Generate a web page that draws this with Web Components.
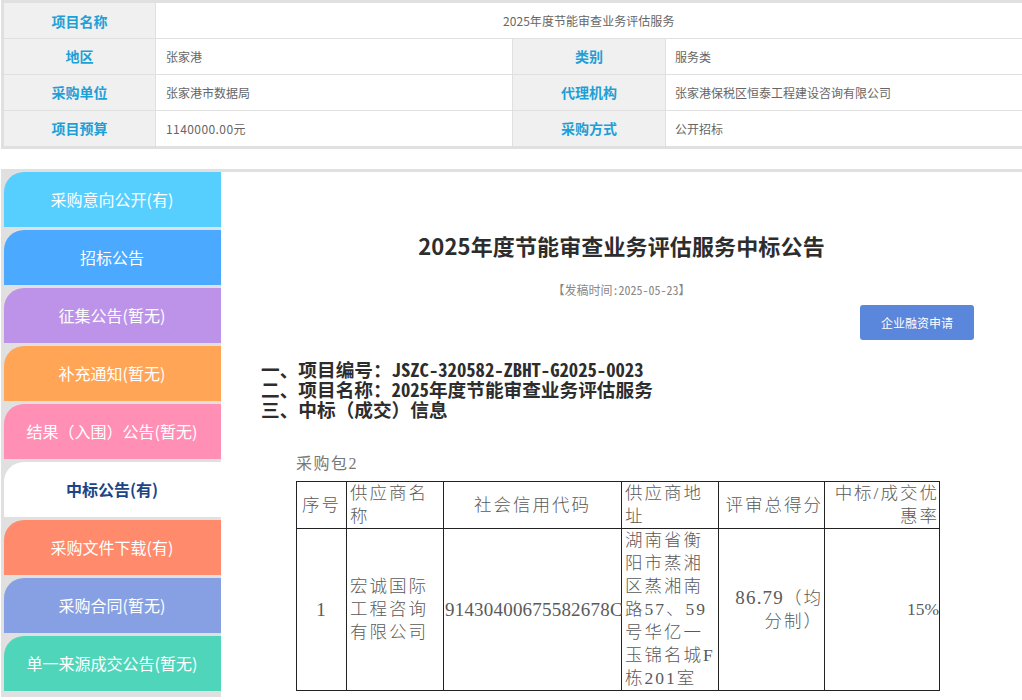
<!DOCTYPE html>
<html lang="zh-CN">
<head>
<meta charset="utf-8">
<title>中标公告</title>
<style>
html,body{margin:0;padding:0;height:700px;overflow:hidden;background:#fff}
body{font-family:"Noto Sans CJK SC","Liberation Sans",sans-serif}
</style>
</head>
<body>
<page-shell>
  <info-table></info-table>
  <notice-layout>
    <side-tab slot="side" color="#56cfff">采购意向公开(有)</side-tab>
    <side-tab slot="side" color="#4ba9ff">招标公告</side-tab>
    <side-tab slot="side" color="#bc93e8">征集公告(暂无)</side-tab>
    <side-tab slot="side" color="#ffa555">补充通知(暂无)</side-tab>
    <side-tab slot="side" color="#ff8fb5">结果（入围）公告(暂无)</side-tab>
    <side-tab slot="side" active>中标公告(有)</side-tab>
    <side-tab slot="side" color="#ff8a6c">采购文件下载(有)</side-tab>
    <side-tab slot="side" color="#87a0e3">采购合同(暂无)</side-tab>
    <side-tab slot="side" color="#4fd6ba">单一来源成交公告(暂无)</side-tab>
    <notice-body></notice-body>
  </notice-layout>
</page-shell>
<script>
function def(name, css, html, extra){
  customElements.define(name, class extends HTMLElement{
    constructor(){super();const r=this.attachShadow({mode:'open'});r.innerHTML='<style>'+css+'</style>'+html;}
    connectedCallback(){ if(extra) extra(this); }
  });
}
def('page-shell',':host{display:block;width:1022px;height:700px;overflow:hidden}','<slot></slot>');

def('info-table',`
:host{display:block;width:1030px;margin-left:1px;border:3px solid #e0e0e0;border-right:0;box-sizing:border-box;font-size:12px;color:#666}
.g{display:grid;grid-template-columns:152px 356px 1px 153px 1fr;grid-auto-rows:35px;row-gap:1px;background:#e0e0e0}
.l{background:#f0f0f0;color:#1e9fd6;font-size:14px;font-weight:700;display:flex;align-items:center;justify-content:center;border-right:1px solid #e0e0e0;box-sizing:border-box;padding-bottom:2px}
.l.first{padding-bottom:0}
.v{background:#fff;display:flex;align-items:center;padding-left:10px}
.v.rv{padding-left:9px}
.sp{background:#e0e0e0}
.full{grid-column:2/6;justify-content:flex-start;padding-left:347px;letter-spacing:.05px}
.d{letter-spacing:.42px}
`,`<div class="g">
<div class="l first">项目名称</div><div class="v full">2025年度节能审查业务评估服务</div>
<div class="l">地区</div><div class="v">张家港</div><div class="sp"></div><div class="l">类别</div><div class="v rv">服务类</div>
<div class="l">采购单位</div><div class="v">张家港市数据局</div><div class="sp"></div><div class="l">代理机构</div><div class="v rv">张家港保税区恒泰工程建设咨询有限公司</div>
<div class="l">项目预算</div><div class="v"><span class="d">1140000.00</span>元</div><div class="sp"></div><div class="l">采购方式</div><div class="v rv">公开招标</div>
</div>`);

def('notice-layout',`
:host{display:flex;margin:20px 0 0 1px;border-top:3px solid #e0e0e0;height:528px;box-sizing:border-box}
.side{width:220px;flex:none;background:#e0e0e0;padding-left:3px;box-sizing:border-box;display:flex;flex-direction:column;gap:3px}
.main{flex:1;min-width:0}
`,`<div class="side"><slot name="side"></slot></div><div class="main"><slot></slot></div>`);

def('side-tab',`
:host{display:flex;flex:none;height:55px;width:217px;box-sizing:border-box;padding:0 1px 2px 0;align-items:center;justify-content:center;color:#fff;font-size:16px;border-top-left-radius:20px;background:var(--c,#fff)}
:host([active]){color:#1c4587;font-weight:700;background:#fff}
`,`<slot></slot>`,el=>{const c=el.getAttribute('color');if(c)el.style.setProperty('--c',c);});

def('notice-body',`
:host{display:block;color:#333}
h1{margin:0;padding-top:57px;height:32px;line-height:32px;font-size:22px;letter-spacing:.13px;font-weight:700;text-align:center;color:#2d2d2d}
.date{margin-top:19px;height:20px;line-height:20px;text-align:center;font-size:12px;color:#888;font-feature-settings:"hwid"}
.act{display:flex;justify-content:flex-end;padding-right:48px;margin-top:5px}
.btn{width:114px;height:35px;display:flex;align-items:center;justify-content:center;background:#5a86db;color:#fff;font-size:12px;border-radius:3px}
.heads{margin:19px 0 0 40px;font-size:18.67px;line-height:20px;font-weight:700;color:#2d2d2d}
.heads span{font-feature-settings:"hwid";line-height:20px}
.pack{margin:33px 0 0 75px;height:20px;line-height:20px;font-size:16px;letter-spacing:1.5px;color:#777}
.pack i{font-style:normal;font-family:"Liberation Serif",serif;letter-spacing:0}
table{margin:9px 0 0 75px;border-collapse:collapse;table-layout:fixed;width:643px;font-size:17.5px;letter-spacing:2px;color:#5a5a5a;font-family:"Liberation Serif","Noto Sans CJK SC",serif}
td{border:1.5px solid #222;padding:0 0 0 3px;box-sizing:border-box;font-weight:300}
tr.h{height:47px}
tr.h td{line-height:23px}
tr.b{height:162px}
tr.b td{line-height:23px}
.c{text-align:center;padding:0}
.r{text-align:right;padding:0}
.nw{white-space:nowrap;letter-spacing:.2px;font-size:19px;padding:0 0 0 1px}
.num{font-size:19px;letter-spacing:1.2px}
.r.num{letter-spacing:0;font-size:17.5px}
.sc{padding:0 1px 0 0}
`,`<h1>2025年度节能审查业务评估服务中标公告</h1>
<div class="date">【发稿时间:2025-05-23】</div>
<div class="act"><div class="btn">企业融资申请</div></div>
<div class="heads">一、项目编号：<span>JSZC-320582-ZBHT-G2025-0023</span><br>二、项目名称：<span>2025</span>年度节能审查业务评估服务<br>三、中标（成交）信息</div>
<div class="pack">采购包<i>2</i></div>
<table>
<colgroup><col style="width:50px"><col style="width:97px"><col style="width:178px"><col style="width:97px"><col style="width:106px"><col style="width:115px"></colgroup>
<tr class="h"><td class="c">序号</td><td>供应商名称</td><td class="c">社会信用代码</td><td>供应商地址</td><td class="r sc">评审总得分</td><td class="r">中标/成交优惠率</td></tr>
<tr class="b"><td class="c num">1</td><td>宏诚国际工程咨询有限公司</td><td class="nw">91430400675582678C</td><td>湖南省衡阳市蒸湘区蒸湘南路57、59号华亿一玉锦名城F栋201室</td><td class="r sc"><span class="num">86.79</span>（均分制）</td><td class="r num">15%</td></tr>
</table>`);
</script>
</body>
</html>
